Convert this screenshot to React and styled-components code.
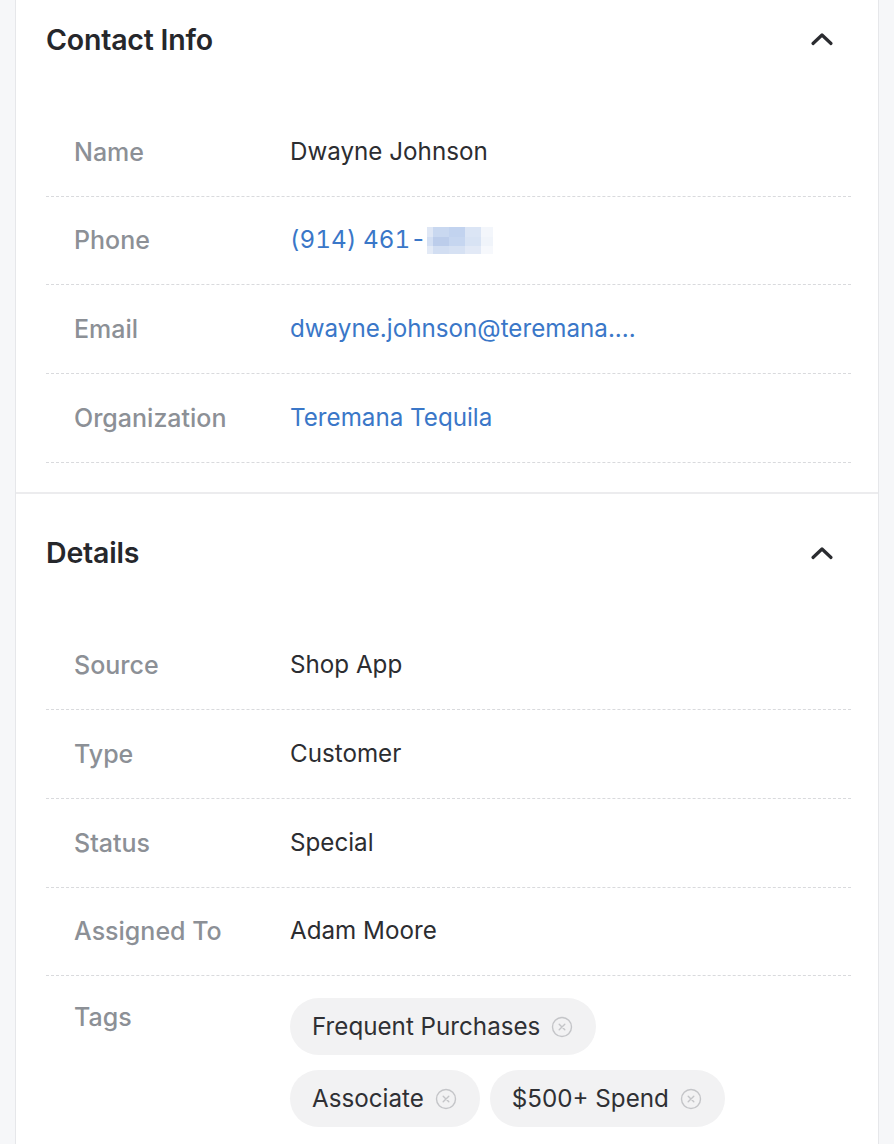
import React from "react";
import styled, { createGlobalStyle } from "styled-components";

const GlobalStyle = createGlobalStyle`
  html, body {
    margin: 0;
    padding: 0;
    background: #f6f7f9;
  }
  body {
    font-family: "Inter", "Liberation Sans", sans-serif;
    -webkit-font-smoothing: antialiased;
  }
`;

const contactRows = [
  { label: "Name", value: "Dwayne Johnson" },
  { label: "Phone", value: "(914) 461-", link: true, masked: true },
  { label: "Email", value: "dwayne.johnson@teremana....", link: true },
  { label: "Organization", value: "Teremana Tequila", link: true },
];

const detailRows = [
  { label: "Source", value: "Shop App" },
  { label: "Type", value: "Customer" },
  { label: "Status", value: "Special" },
  { label: "Assigned To", value: "Adam Moore" },
];

const tags = ["Frequent Purchases", "Associate", "$500+ Spend"];

// pixelated block hiding the end of the phone number
const mosaic = [
  "#dfe7f5", "#c9d8f0", "#c2d3ef", "#dbe5f5", "#f3f6fb",
  "#d3dff3", "#bccdeb", "#c6d6f0", "#d8e3f4", "#f0f4fa",
  "#e3eaf6", "#d2def2", "#d6e1f3", "#e2e9f6", "#f6f8fc",
];

const Panel = styled.div`
  margin: 0 15px;
  background: #ffffff;
  border-left: 1px solid #e6e7ea;
  border-right: 1px solid #e6e7ea;
  min-height: 1144px;
`;

const Section = styled.section`
  padding: ${(p) => (p.$trim ? "18px" : "38px")} 27px 29px 30px;
  border-bottom: 2px solid #ececee;
`;

const Header = styled.div`
  height: 42px;
  margin-bottom: 48px;
  display: flex;
  align-items: center;
  justify-content: space-between;
`;

const Title = styled.h2`
  margin: 0;
  font-size: 28.5px;
  font-weight: 600;
  color: #26272b;
  letter-spacing: -0.2px;
`;

const Toggle = styled.button`
  border: 0;
  background: none;
  padding: 0;
  margin-right: 17px;
  width: 24px;
  height: 24px;
  display: flex;
  align-items: center;
  justify-content: center;
  cursor: pointer;
`;

const Row = styled.div`
  display: grid;
  grid-template-columns: 216px 1fr;
  align-items: ${(p) => (p.$top ? "start" : "center")};
  min-height: 88.67px;
  box-sizing: border-box;
  padding: ${(p) => (p.$top ? "22px 0 24px 28px" : "0 0 0 28px")};
  border-bottom: 1px dashed #d9dadd;
`;

const Label = styled.div`
  font-size: 25px;
  font-weight: 500;
  color: #8c9096;
  line-height: 38px;
`;

const Value = styled.div`
  font-size: 24.2px;
  color: ${(p) => (p.$link ? "#3a77c8" : "#2c2d31")};
  line-height: 38px;
  display: flex;
  align-items: center;
  white-space: nowrap;
`;

const Digits = styled.span`
  font-variant-numeric: tabular-nums;
  letter-spacing: 0.1px;
`;

const Mosaic = styled.span`
  display: inline-grid;
  grid-template-columns: 6px 16px 16px 16px 12px;
  grid-template-rows: 10px 9px 8px;
  margin-left: 1px;
`;

const Cell = styled.span`
  background: ${(p) => p.$c};
`;

const TagList = styled.div`
  display: flex;
  flex-wrap: wrap;
  gap: 15px 10px;
  max-width: 460px;
`;

const Tag = styled.span`
  display: inline-flex;
  align-items: center;
  gap: 11px;
  height: 57px;
  padding: 0 23px 0 22px;
  border-radius: 29px;
  background: #f2f2f3;
  font-size: 24.2px;
  color: #2f3034;
`;

const Remove = styled.span`
  display: flex;
  width: 22px;
  height: 22px;
`;

const Chevron = () => (
  <svg width="24" height="14" viewBox="0 0 24 14">
    <polyline
      points="3,11.5 12,3 21,11.5"
      fill="none"
      stroke="#2b2c30"
      strokeWidth="3.2"
      strokeLinecap="round"
      strokeLinejoin="round"
    />
  </svg>
);

const ClearIcon = () => (
  <svg width="22" height="22" viewBox="0 0 22 22">
    <circle cx="11" cy="11" r="9.5" fill="none" stroke="#c4c5c8" strokeWidth="1.4" />
    <path d="M8.2 8.2 L13.8 13.8 M13.8 8.2 L8.2 13.8" stroke="#c4c5c8" strokeWidth="1.4" strokeLinecap="round" />
  </svg>
);

const InfoRow = ({ label, value, link, masked }) => (
  <Row>
    <Label>{label}</Label>
    <Value $link={link}>
      {masked ? <Digits>{value}</Digits> : value}
      {masked && (
        <Mosaic>
          {mosaic.map((c, i) => (
            <Cell key={i} $c={c} />
          ))}
        </Mosaic>
      )}
    </Value>
  </Row>
);

const Card = ({ title, trim, children }) => (
  <Section $trim={trim}>
    <Header>
      <Title>{title}</Title>
      <Toggle aria-label="Collapse">
        <Chevron />
      </Toggle>
    </Header>
    {children}
  </Section>
);

export default function App() {
  return (
    <>
      <GlobalStyle />
      <Panel>
        <Card title="Contact Info" trim>
          {contactRows.map((r) => (
            <InfoRow key={r.label} {...r} />
          ))}
        </Card>
        <Card title="Details">
          {detailRows.map((r) => (
            <InfoRow key={r.label} {...r} />
          ))}
          <Row $top>
            <Label>Tags</Label>
            <TagList>
              {tags.map((t) => (
                <Tag key={t}>
                  {t}
                  <Remove>
                    <ClearIcon />
                  </Remove>
                </Tag>
              ))}
            </TagList>
          </Row>
        </Card>
      </Panel>
    </>
  );
}
